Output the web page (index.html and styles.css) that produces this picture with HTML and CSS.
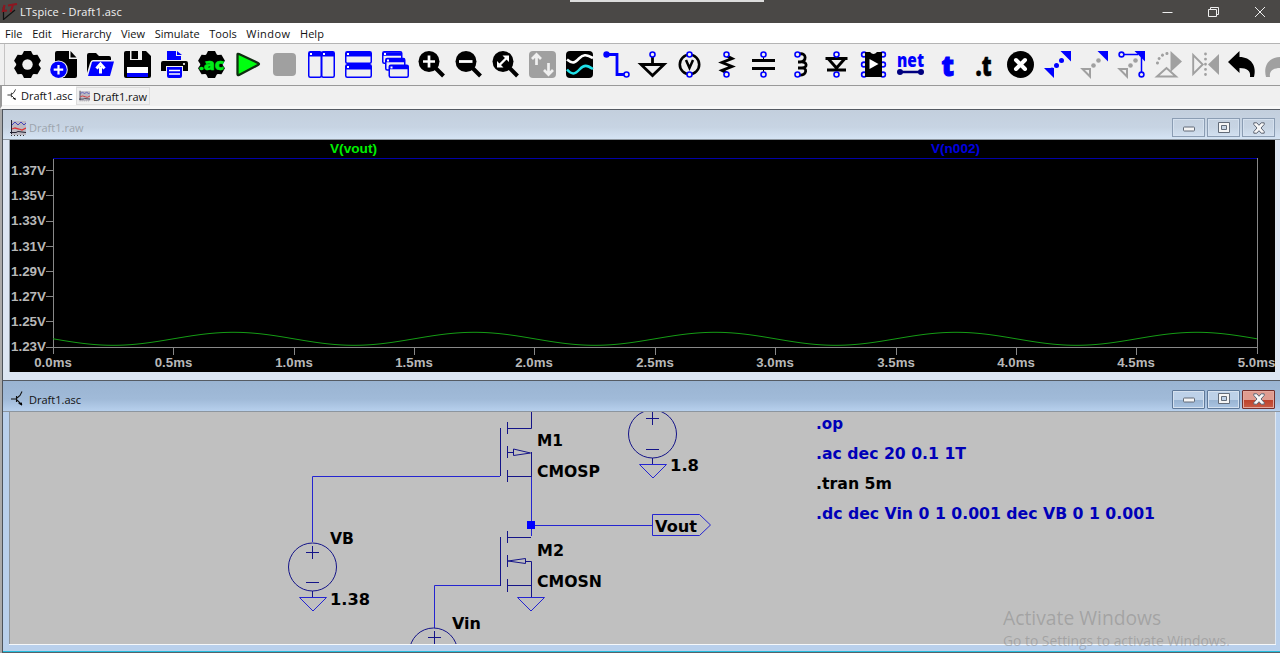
FILE: index.html
```html
<!DOCTYPE html>
<html lang="en">
<head>
<meta charset="utf-8">
<title>LTspice - Draft1.asc</title>
<link rel="stylesheet" href="styles.css">
</head>
<body>
<svg class="defs" width="0" height="0">
  <defs>
    <symbol id="gearbody" viewBox="0 0 27 27"><circle cx="13.500" cy="13.500" r="11.300"/><path id="teeth" d="M10 0h7l1.500 3v21L17 27h-7l-1.500-3V3z"/><use href="#teeth" transform="rotate(60 13.500 13.500)"/><use href="#teeth" transform="rotate(120 13.500 13.500)"/></symbol>
    <symbol id="asc" viewBox="0 0 14 16"><path d="M0 8h5M5.500 5v6M6 7l3-2.500 2-4M6 9l3 3 2 2" fill="none" stroke="#111" stroke-width="1.100"/><path d="M7 12.500l4-1v3z"/></symbol>
    <symbol id="raw" viewBox="0 0 16 16"><path fill="#bbb9c2" d="M1 1h15v14H1z"/><path d="M1.500 0v14M0 12.500h6l2-1 8 1" fill="none" stroke="#223"/><path d="M2 5l3-3 3 3 3-3 3 3 2-2" fill="none" stroke="#44b"/><path d="M2 9l3-1 4 1 3 1 4-2" fill="none" stroke="#d33" stroke-width="1.300"/><path d="M1 15.500h15" stroke="#333" stroke-dasharray="1 2"/></symbol>
    <symbol id="cmin" viewBox="0 0 12 12"><rect x=".5" y="5" width="11" height="4" rx=".8" fill="#f5f5f5" stroke="#626b78"/></symbol>
    <symbol id="cmax" viewBox="0 0 12 12"><path fill="#f5f5f5" fill-rule="evenodd" stroke="#626b78" d="M.5.5h11v10H.5zM3.500 3.500v4h5v-4z"/></symbol>
    <symbol id="ccls" viewBox="0 0 12 12"><path d="M.8.800h3L6 3.300 8.200.800h3v1.700L8 6l3.200 3.500v1.700h-3L6 8.700l-2.200 2.500h-3V9.500L4 6 .8 2.500z" fill="#f8f8f8" stroke="#5d6472"/></symbol>
  </defs>
</svg>
<div class="app">
  <header class="titlebar">
    <svg class="logo" viewBox="0 0 17 17"><path d="M2.500 4v12.500L14 7" fill="none" stroke="#111" stroke-width="1.200"/><path d="M3.500 2L2 8l4-.5M7 2.500l9-1.500M12 2L9.500 9" fill="none" stroke="#8c1720" stroke-width="2.200"/></svg>
    <span class="title">LTspice - Draft1.asc</span>
    <div class="handle"></div>
    <div class="syscontrols">
      <svg viewBox="0 0 12 12"><path d="M.5 6.500h10"/></svg>
      <svg viewBox="0 0 12 12"><path d="M.5 3.500h8v7h-8zM2.500 3.500v-2h8v7h-2"/></svg>
      <svg viewBox="0 0 12 12"><path d="M1 1l10 10M11 1L1 11"/></svg>
    </div>
  </header>
  <nav class="menu"><span>File</span><span>Edit</span><span>Hierarchy</span><span>View</span><span>Simulate</span><span>Tools</span><span class="wide">Window</span><span>Help</span></nav>
  <div class="toolbar">
    <svg viewBox="0 0 27 27"><use href="#gearbody"/><circle cx="13.500" cy="13.500" r="5.200" fill="#f0f0f0"/></svg>
    <svg viewBox="0 0 27 27"><path d="M7 0h12v8h8v17q0 2-2 2H7q-2 0-2-2V2q0-2 2-2z"/><path d="M20.500 0l6 6.500h-6z"/><circle cx="8.500" cy="18.700" r="9.300" fill="#f0f0f0"/><circle cx="8.500" cy="18.700" r="8.300" fill="#00f"/><path d="M8.500 14v9.500M3.700 18.700h9.500" stroke="#fff" stroke-width="2.200"/></svg>
    <svg viewBox="0 0 27 27"><path d="M0 22V4q0-2 2-2h7l3 3h10q2 0 2 2v2H6q-2 0-3 3z"/><path d="M6 10.500h21L23 25H1L5 11z" fill="#00f"/><path d="M13.500 22.500V16M9.500 17.500l4-4.500 4 4.500" fill="none" stroke="#fff" stroke-width="3"/></svg>
    <svg viewBox="0 0 27 27"><path d="M2 0h20l5 5v20q0 2-2 2H2q-2 0-2-2V2q0-2 2-2z"/><path fill="#f0f0f0" d="M6 0h12v9H6z"/><path d="M7.500 0H14v8H7.500z"/><path fill="#fff" d="M3 16h21v7H3z"/><path fill="#00f" d="M3 22h21v4H3z"/></svg>
    <svg viewBox="0 0 27 27"><path fill="#00f" d="M6 0h9v5h5v4H6zM16 0l5 4h-5z"/><path d="M2 10h23q2 0 2 2v8h-5v-5H5v5H0v-8q0-2 2-2z"/><path fill="#00f" d="M6 16h15v9q0 2-2 2H8q-2 0-2-2z"/><path d="M8 19.500h11M8 23h11" stroke="#fff" stroke-width="1.300"/><circle cx="23" cy="13" r="1.100" fill="#fff"/></svg>
    <svg viewBox="0 0 27 27"><use href="#gearbody"/><text x="1" y="18.500" textLength="25" lengthAdjust="spacingAndGlyphs" font-size="15.500" class="glyph" fill="#00ec18" stroke="#00ec18" stroke-width=".5">.ac</text></svg>
    <svg viewBox="0 0 27 27"><path d="M3.500 3.500Q3.500 2.500 5 3l19 9q2 1 0 2L5 24q-1.500.5-1.500-1z" fill="#00ff10" stroke="#102d10" stroke-width="2.300" stroke-linejoin="round"/></svg>
    <svg viewBox="0 0 27 27"><rect x="2" y="2" width="23" height="23" rx="4" fill="#a0a0a0"/></svg>
    <svg viewBox="0 0 27 27"><g fill="#f0f0f0" stroke="#00f" stroke-width="1.500"><rect x=".75" y=".75" width="12.500" height="25.500" rx="1.500"/><rect x="13.750" y=".75" width="12.500" height="25.500" rx="1.500"/></g><path d="M1 1h25v4.500H1z" fill="#00f"/><path d="M2 2h2v2H2zM15 2h2v2h-2z" fill="#fff"/></svg>
    <svg viewBox="0 0 27 27"><g fill="#f0f0f0" stroke="#00f" stroke-width="1.500"><rect x=".75" y=".75" width="25.500" height="11.500" rx="1.500"/><rect x=".75" y="13.750" width="25.500" height="12.500" rx="1.500"/></g><path d="M1 1h25v4.500H1zM1 14h25v4.500H1z" fill="#00f"/><path d="M2 2h2v2H2zM2 15h2v2H2z" fill="#fff"/></svg>
    <svg viewBox="0 0 27 27"><g fill="#f0f0f0" stroke="#00f" stroke-width="1.500"><rect x=".75" y=".75" width="19" height="11.500" rx="1.500"/><path d="M1 3h19" stroke-width="3.500"/><rect x="3.750" y="7.500" width="19" height="11.500" rx="1.500"/><path d="M4 9.500h19" stroke-width="3.500"/><rect x="7.250" y="14.250" width="19" height="12" rx="1.500"/><path d="M7.500 16.500h19" stroke-width="3.500"/></g><path d="M2 2h2v2H2zM5 8.500h2v2H5zM8.500 15.500h2v2h-2z" fill="#fff"/></svg>
    <svg viewBox="0 0 27 27"><circle cx="11" cy="10.500" r="10.500"/><path d="M17 16.500l8.500 8.500" stroke="#000" stroke-width="4"/><path d="M11 4.500v12M5 10.500h12" stroke="#fff" stroke-width="2.700"/></svg>
    <svg viewBox="0 0 27 27"><circle cx="11" cy="10.500" r="10.500"/><path d="M17 16.500l8.500 8.500" stroke="#000" stroke-width="4"/><path d="M4 10.500h13.500" stroke="#fff" stroke-width="2.800"/></svg>
    <svg viewBox="0 0 27 27"><circle cx="11" cy="10.500" r="10.500"/><path d="M17 16.500l8.500 8.500" stroke="#000" stroke-width="4"/><path d="M7 14.500l8-8" stroke="#fff" stroke-width="2.400"/><path fill="#fff" d="M10.500 4.500H17V11zM5 10v6.500h6.500z"/></svg>
    <svg viewBox="0 0 27 27"><rect width="27" height="27" rx="4" fill="#a0a0a0"/><path d="M7.500 14V4.500M3 8l4.500-4.500L12 8M19.500 12v10M15 19l4.500 4.500L24 19" fill="none" stroke="#f0f0f0" stroke-width="2.700"/></svg>
    <svg viewBox="0 0 27 27"><rect width="27" height="27" rx="4"/><path d="M1 8.500c6 5 8 3 12-1s7-4.500 14-.5" fill="none" stroke="#fff" stroke-width="2.600"/><path d="M1 18.500c5 5.500 8 5 12.500 0S21 14 27 18" fill="none" stroke="#20e0e8" stroke-width="2.600"/></svg>
    <svg viewBox="0 0 27 27"><path d="M3 3.500h11v20h7" fill="none" stroke="#00f" stroke-width="2.800"/><circle cx="3.500" cy="3.500" r="3.200" fill="#00f"/><circle cx="23.500" cy="23.500" r="2.500" fill="#f0f0f0" stroke="#00f" stroke-width="1.600"/></svg>
    <svg viewBox="0 0 27 27"><path d="M13.500 5v8M2 13.500h23L13.500 24.500z" fill="none" stroke="#000" stroke-width="2.800"/><circle class="pin" cx="13.500" cy="3.500" r="2.500"/></svg>
    <svg viewBox="0 0 27 27"><circle cx="13.500" cy="13.500" r="9.700" fill="none" stroke="#000" stroke-width="2.600"/><path d="M10 9l3.500 8L17 9" fill="none" stroke="#000" stroke-width="2.500"/><circle class="pin" cx="13.500" cy="3.500" r="2.500"/><circle class="pin" cx="13.500" cy="23.500" r="2.500"/></svg>
    <svg viewBox="0 0 27 27"><path d="M14 5l5 2.500-10 4 10 4-10 4L14 22" fill="none" stroke="#000" stroke-width="2.900"/><circle class="pin" cx="13.500" cy="3.500" r="2.500"/><circle class="pin" cx="13.500" cy="23.500" r="2.500"/></svg>
    <svg viewBox="0 0 27 27"><path d="M2 9.500h23M2 17.500h23" stroke="#000" stroke-width="2.800"/><path d="M13.500 6v3M13.500 18v3" stroke="#000"/><circle class="pin" cx="13.500" cy="3.500" r="2.500"/><circle class="pin" cx="13.500" cy="23.500" r="2.500"/></svg>
    <svg viewBox="0 0 27 27"><path d="M12 3c8-2 8 8 1 8h-2 2c8-1 8 6.500 1 6h-3 3c7-1 6 8-2 7" fill="none" stroke="#000" stroke-width="2.800"/><circle class="pin" cx="10.500" cy="3.500" r="2.500"/><circle class="pin" cx="10.500" cy="23.500" r="2.500"/></svg>
    <svg viewBox="0 0 27 27"><path d="M2.500 7.500h22M5.500 8l8 9 8-9M4 19h19" fill="none" stroke="#000" stroke-width="2.900"/><circle class="pin" cx="13.500" cy="3.500" r="2.500"/><circle class="pin" cx="13.500" cy="23.500" r="2.500"/></svg>
    <svg viewBox="0 0 27 27"><g class="pin"><circle cx="4" cy="3.500" r="2.400"/><circle cx="23" cy="3.500" r="2.400"/><circle cx="4" cy="13.500" r="2.400"/><circle cx="23" cy="13.500" r="2.400"/><circle cx="4" cy="23.500" r="2.400"/><circle cx="23" cy="23.500" r="2.400"/></g><path d="M5 1h5q3.500 4 7 0h5v25H5z"/><path d="M9.500 8v10l9-5z" fill="#fff"/></svg>
    <svg viewBox="0 0 27 27"><text x="0" y="16" textLength="27" lengthAdjust="spacingAndGlyphs" font-size="19" class="glyph" fill="#00f">net</text><path d="M3 21h21" stroke="#000080" stroke-width="2.500"/><circle cx="3" cy="21" r="3" fill="#000080"/><circle cx="24" cy="21" r="3" fill="#000080"/></svg>
    <svg viewBox="0 0 27 27"><text x="7.500" y="24.500" textLength="12.500" lengthAdjust="spacingAndGlyphs" font-size="28" class="glyph" fill="#00f" stroke="#00f">t</text></svg>
    <svg viewBox="0 0 27 27"><text x="4.500" y="24.500" textLength="16" lengthAdjust="spacingAndGlyphs" font-size="28" class="glyph" stroke="#000" stroke-width=".6">.t</text></svg>
    <svg viewBox="0 0 27 27"><circle cx="13.500" cy="13.500" r="13.500"/><path d="M9 9l9 9M18 9l-9 9" stroke="#fff" stroke-width="4" stroke-linecap="round"/></svg>
    <svg viewBox="0 0 27 27"><g fill="#00f"><path d="M16.500 0H27v10.500zM0 17h10v10z"/><circle cx="17.500" cy="9.500" r="2.500"/><circle cx="12.500" cy="14.500" r="2.500"/><circle cx="8" cy="18.500" r="2"/></g></svg>
    <svg viewBox="0 0 27 27"><path fill="#00f" d="M16.500 0H27v10.500z"/><path d="M1.500 18h7.500v7.500z" fill="#f0f0f0" stroke="#a0a0a0" stroke-width="2"/><circle cx="17.500" cy="9.500" r="2.300" fill="#a0a0a0"/><circle cx="12.500" cy="14.500" r="2.300" fill="#a0a0a0"/></svg>
    <svg viewBox="0 0 27 27"><path fill="#00f" d="M16.500 0H27v10.500z"/><path d="M5 3.500h15M23.500 6v15" stroke="#00f" stroke-width="1.500"/><circle class="pin" cx="3.500" cy="3.500" r="2.400"/><circle class="pin" cx="23.500" cy="23.500" r="2.400"/><path d="M1.500 18h7.500v7.500z" fill="#f0f0f0" stroke="#a0a0a0" stroke-width="2"/><circle cx="17.500" cy="9.500" r="2.300" fill="#a0a0a0"/><circle cx="12.500" cy="14.500" r="2.300" fill="#a0a0a0"/></svg>
    <svg viewBox="0 0 27 27"><path fill="#a0a0a0" d="M15.500 0L27 10.500 15.500 21z"/><path d="M2 25.500h19L11.500 17z" fill="#f0f0f0" stroke="#a0a0a0" stroke-width="2"/><path d="M12 2.500Q2.500 4 2 16" fill="none" stroke="#a0a0a0" stroke-width="3" stroke-linecap="round" stroke-dasharray=".1 4.700"/></svg>
    <svg viewBox="0 0 27 27"><path d="M1.200 4v19l9.500-9.500z" fill="none" stroke="#a0a0a0" stroke-width="1.900"/><path fill="#a0a0a0" d="M27 3v21L16 13.500z"/><path d="M13.500 3v22" stroke="#a0a0a0" stroke-width="2.800" stroke-linecap="round" stroke-dasharray=".1 5"/></svg>
    <svg viewBox="0 0 27 27"><path d="M11.500 0v6C23 6 29 15 26 26h-4c1-6-3-9-10.500-9v5L0 11z"/></svg>
    <svg viewBox="0 0 27 27"><path fill="#a0a0a0" d="M15.500 0v6C4 6-2 15 1 26h4c-1-6 3-9 10.500-9v5L27 11z"/></svg>
  </div>
  <div class="tabs">
    <div class="tab active"><svg viewBox="0 0 14 16"><use href="#asc"/></svg><span>Draft1.asc</span></div>
    <div class="tab"><svg viewBox="0 0 16 16"><use href="#raw"/></svg><span>Draft1.raw</span></div>
  </div>
  <main class="mdi">
    <section class="win inactive">
      <div class="wbar"><svg class="wicon" viewBox="0 0 16 16"><use href="#raw"/></svg><span>Draft1.raw</span>
        <div class="wbtns"><i><svg><use href="#cmin"/></svg></i><i><svg><use href="#cmax"/></svg></i><i><svg><use href="#ccls"/></svg></i></div></div>
      <svg class="plot" viewBox="9 140 1267 232">
        <g class="axis"><path d="M53.500 158v196M53 347.500h1205M1257.500 158v196" stroke="#888"/>
        <path d="M46 170.500h7M46 195.500h7M46 221.500h7M46 246.500h7M46 271.500h7M46 296.500h7M46 321.500h7M46 347.500h7M173.500 347v8M294.500 347v8M414.500 347v8M534.500 347v8M655.500 347v8M775.500 347v8M896.500 347v8M1016.500 347v8M1136.500 347v8" stroke="#888"/></g>
        <path class="axis" d="M53 158.500h1204" stroke="#0000a8"/>
        <path id="trace" class="trace" d=""/>
        <g class="volts"><text x="11" y="175">1.37V</text><text x="11" y="200">1.35V</text><text x="11" y="225">1.33V</text><text x="11" y="251">1.31V</text><text x="11" y="276">1.29V</text><text x="11" y="301">1.27V</text><text x="11" y="326">1.25V</text><text x="11" y="351">1.23V</text></g>
        <g class="times"><text x="53" y="367">0.0ms</text><text x="173.500" y="367">0.5ms</text><text x="294" y="367">1.0ms</text><text x="414" y="367">1.5ms</text><text x="534" y="367">2.0ms</text><text x="655" y="367">2.5ms</text><text x="775" y="367">3.0ms</text><text x="896" y="367">3.5ms</text><text x="1016" y="367">4.0ms</text><text x="1136" y="367">4.5ms</text><text x="1256.500" y="367">5.0ms</text></g>
        <text class="lbl" x="330" y="153" textLength="47" fill="#00f000">V(vout)</text><text class="lbl" x="931" y="153" textLength="49" fill="#0000e0">V(n002)</text>
      </svg>
    </section>
    <section class="win current">
      <div class="wbar"><svg class="wicon" viewBox="0 0 14 16"><use href="#asc"/></svg><span>Draft1.asc</span>
        <div class="wbtns"><i><svg><use href="#cmin"/></svg></i><i><svg><use href="#cmax"/></svg></i><i class="close"><svg><use href="#ccls"/></svg></i></div></div>
      <svg class="schem" viewBox="9 412 1267 232">
        <g class="wires"><path d="M312.500 542V476.500H500M531.500 476v60M531 525.500h121M434.500 628V585.500H500M652.500 514.500h47l11 10.500-11 10.500h-47zM299.500 597.500h27l-13.500 13.500zM517.500 597.500h27l-13.500 13.500zM639.500 464.500h27l-13.500 13.500z"/></g>
        <g class="parts">
          <path d="M500.500 428v48M507.500 422v12M507.500 446v12M507.500 470v12M507 428.500h24.500V412M507 452.500h6M513.500 449v6.500l17-2.500zM531.500 452v25M507 476.500h24"/>
          <path d="M500.500 537v49M507.500 531v12M507.500 555v12M507.500 579v13M507 537.500h24M508 561l17.500-2.500v5zM525 561.500h6.500V597M507 585.500h24"/>
          <circle cx="312.500" cy="567" r="24"/><path d="M312.500 546v13M306 552.500h13M306 582.500h13M312.500 591v6"/>
          <circle cx="652.500" cy="434" r="24"/><path d="M652.500 412v13M646 418.500h13M646 449.500h13M652.500 458v6"/>
          <circle cx="433.500" cy="652" r="24"/><path d="M434.500 631v13M428 637.500h13"/>
        </g>
        <rect x="527" y="521" width="8" height="8" fill="#00f"/>
        <g class="names"><text x="537" y="446" textLength="26">M1</text><text x="537" y="476.500" textLength="63">CMOSP</text><text x="537" y="555.500" textLength="27">M2</text><text x="537" y="586.500" textLength="65">CMOSN</text><text x="670" y="471" textLength="29">1.8</text><text x="655" y="532" textLength="42">Vout</text><text x="330" y="543.500" textLength="24">VB</text><text x="330" y="604.500" textLength="40">1.38</text><text x="452" y="628.500" textLength="29">Vin</text><text x="816" y="488.500" textLength="76">.tran 5m</text>
        <g fill="#0000b8"><text x="816" y="429" textLength="27">.op</text><text x="816" y="458.500" textLength="150">.ac dec 20 0.1 1T</text><text x="816" y="519" textLength="339">.dc dec Vin 0 1 0.001 dec VB 0 1 0.001</text></g></g>
      </svg>
    </section>
  </main>
  <div class="watermark"><p class="big">Activate Windows</p><p class="small">Go to Settings to activate Windows.</p></div>
</div>
<script src="plot.js"></script>
</body>
</html>
```
FILE: plot.js
```js
// 1 kHz output waveform over 5 ms
const points = [];
for (let x = 53; x <= 1257; x += 2) {
  const y = 338.8 + 6.5 * Math.sin((x - 53) / 240.8 * 2 * Math.PI);
  points.push(x + ' ' + y.toFixed(2));
}
document.getElementById('trace').setAttribute('d', 'M' + points.join('L'));

// Even letter fit for labels
document.querySelectorAll('.volts text').forEach(t => t.setAttribute('textLength', 35));
document.querySelectorAll('.times text').forEach(t => t.setAttribute('textLength', 37.5));
document.querySelectorAll('.names text, .lbl, .volts text, .times text').forEach(t => t.setAttribute('lengthAdjust', 'spacingAndGlyphs'));
```
FILE: styles.css
```css
* { box-sizing: border-box; }
body { margin: 0; overflow: hidden; background: #f0f0f0; font-family: "Open Sans", "Noto Sans", sans-serif; font-size: 11px; color: #111; }
svg { display: block; flex: none; }
.defs { position: absolute; }
.app { position: relative; width: 1280px; height: 653px; display: flex; flex-direction: column; overflow: hidden; }
.titlebar { height: 23px; flex: none; background: #4a4846; color: #f2f2f2; display: flex; align-items: center; }
.logo { width: 17px; height: 17px; margin: 0 2px 0 1px; }
.title { width: 550px; letter-spacing: .13px; }
.handle { width: 194px; height: 2px; align-self: flex-start; background: #dcdcdc; }
.syscontrols { margin-left: auto; padding-right: 14px; display: flex; gap: 34px; }
.syscontrols svg { width: 12px; height: 12px; fill: none; stroke: #eee; stroke-width: 1; }
.menu { height: 20px; flex: none; background: #fff; display: flex; align-items: center; padding-left: 5px; gap: 9.6px; letter-spacing: .03px; }
.menu .wide { letter-spacing: .42px; }
.toolbar { height: 43px; flex: none; border-top: 1px solid #b4b4b4; border-bottom: 1px solid #999; display: flex; align-items: center; padding-left: 13.5px; gap: 9.82px; background: linear-gradient(90deg, transparent 4px, #c4c4c4 4px, #c4c4c4 5px, transparent 5px), #f0f0f0; }
.toolbar svg { width: 27px; height: 27px; overflow: visible; }
.glyph { font-family: "Open Sans", sans-serif; font-weight: 800; }
.pin { fill: #f0f0f0; stroke: #00f; stroke-width: 1.6; }
.tabs { height: 23px; flex: none; display: flex; border-left: 2px solid #999; border-bottom: 3px solid #f8f8f8; letter-spacing: -.05px; }
.tab { height: 18px; margin-top: 1px; display: flex; align-items: center; gap: 3px; padding: 0 2px; border: 1px solid #ddd; }
.tab svg { width: 11px; height: 12px; }
.tab.active { background: #fff; border-color: #fff; height: 19px; margin-top: 0; width: 74px; padding-left: 4px; padding-bottom: 1px; }
.mdi { flex: 1; border-left: 2px solid #aaa; display: flex; flex-direction: column; }
.win { border-left: 1px solid #4c535b; border-top: 1px solid #555b63; padding: 0 4px 0 6px; flex: none; }
.inactive { height: 271px; background: #dbe5f2; }
.current { height: 273px; background: #b9d0ec; border-bottom: 1px solid #55636b; box-shadow: inset 0 -1px #25bddd; }
.wbar { height: 31px; margin: 0 -4px 0 -6px; padding: 6px 5px 0 7px; display: flex; align-items: center; border-bottom: 1px solid #8c959e; }
.inactive .wbar { background: linear-gradient(#c3cfdd, #c7d4e3 60%, #d5e4f4); color: #9ca4ad; height: 30px; }
.current .wbar { background: linear-gradient(#9ab4d2, #a0bad8 60%, #b7d0ed); }
.wicon { width: 16px; height: 16px; margin-right: 3px; }
.wbtns { margin-left: auto; display: flex; gap: 2px; }
.wbtns i { width: 33px; height: 19px; border: 1px solid #8b9db3; display: flex; align-items: center; justify-content: center; box-shadow: inset 0 0 0 1px #d5e1ef; }
.wbtns svg { width: 12px; height: 12px; }
.current .wbtns i { border-color: #5f7999; border-radius: 1px; background: linear-gradient(#bdd1e8 50%, #98b3d1 50%, #aac4e2); }
.current .wbtns .close { border-color: #742f2b; background: linear-gradient(#df9c90 50%, #bd3f28 50%, #c95c45); box-shadow: inset 0 0 0 1px #e4a99e; }
.plot, .schem { width: 1267px; height: 232px; border-left: 1px solid #8c959e; border-right: 1px solid #dfe8f2; }
.plot { background: #000; font: bold 12.5px "Liberation Sans", sans-serif; }
.plot .axis { shape-rendering: crispEdges; fill: none; }
.plot, .schem { box-sizing: border-box; padding: 0; }
.trace { fill: none; stroke: #159c15; stroke-width: 1; }
.volts, .times { fill: #b8b8b8; }
.times { text-anchor: middle; }
.schem { background: #c0c0c0; box-shadow: 0 1px #f5f8fb; }
.plot, .schem { border: 0; outline: 0; }
.plot { box-shadow: inset 1px 0 #8c959e, inset -1px 0 #dfe8f2; }
.schem { box-shadow: 0 1px #f5f8fb, inset 1px 0 #8c959e, inset -1px 0 #dfe8f2; }
.wires, .parts { fill: none; stroke-width: 1; }
.wires { stroke: #2424d0; }
.parts { stroke: #141488; }
.names { font: bold 15.5px "DejaVu Sans", sans-serif; }
.watermark { position: absolute; left: 1003px; top: 605px; color: rgba(115, 115, 115, .38); white-space: nowrap; }
.watermark p { margin: 0; }
.big { font-size: 19.3px; line-height: 26px; }
.small { font-size: 13.85px; line-height: 20px; }
```
